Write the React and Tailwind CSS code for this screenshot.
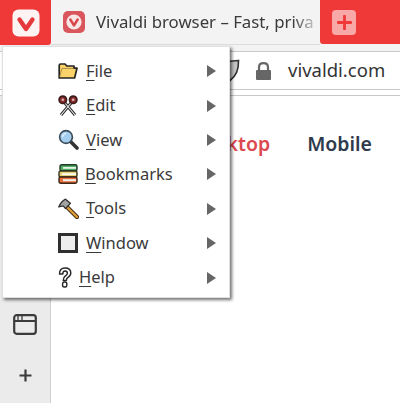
const font = { fontFamily: '"Noto Sans", "Open Sans", sans-serif' };

function VivaldiLogo() {
  return (
    <svg width="28" height="28" viewBox="0 0 28 28">
      <rect x="0.5" y="0.5" width="27" height="27" rx="6" fill="#fdf3f3" />
      <path d="M7.5 10.5 L14 20 L20.5 10.5" fill="none" stroke="#e5393c" strokeWidth="4.4" strokeLinecap="round" strokeLinejoin="round" />
    </svg>
  );
}

function TabFavicon() {
  return (
    <svg width="22" height="22" viewBox="0 0 22 22">
      <rect width="22" height="22" rx="5" fill="#d9575c" />
      <circle cx="11" cy="11" r="7.6" fill="#f9e6e6" />
      <path d="M7.4 8.6 L11 14.4 L14.6 8.6" fill="none" stroke="#d9474c" strokeWidth="2.6" strokeLinecap="round" strokeLinejoin="round" />
    </svg>
  );
}

function FolderIcon() {
  return (
    <svg width="20" height="20" viewBox="0 0 20 20">
      <path d="M1.2 17 V4.5 Q1.2 3 2.6 3 H7 L8.8 5 H16 V7.2 H19 L16.6 17 Z" fill="#fcd36a" stroke="#242424" strokeWidth="1.7" strokeLinejoin="round" />
      <path d="M1.6 16 L4 7.4 H16" fill="none" stroke="#8a7436" strokeWidth="0.7" />
    </svg>
  );
}

function ScissorsIcon() {
  return (
    <svg width="20" height="21" viewBox="0 0 20 21">
      <path d="M6.5 7.5 L17 20 M13.5 7.5 L3 20" stroke="#2b2b2b" strokeWidth="3" />
      <path d="M6.5 7.5 L17 20 M13.5 7.5 L3 20" stroke="#ececec" strokeWidth="1.1" />
      <circle cx="4.8" cy="4.8" r="3.7" fill="#8f2a2a" stroke="#3a1b1b" strokeWidth="1.7" />
      <circle cx="15.2" cy="4.8" r="3.7" fill="#8f2a2a" stroke="#3a1b1b" strokeWidth="1.7" />
      <circle cx="4.8" cy="4.8" r="1.3" fill="#d8b4b4" />
      <circle cx="15.2" cy="4.8" r="1.3" fill="#d8b4b4" />
    </svg>
  );
}

function MagnifierIcon() {
  return (
    <svg width="21" height="21" viewBox="0 0 21 21">
      <path d="M12.5 12.5 L19 19" stroke="#333" strokeWidth="3.6" strokeLinecap="round" />
      <circle cx="8" cy="8" r="6.4" fill="#a5cdf0" stroke="#3b4a55" strokeWidth="1.6" />
      <path d="M4.5 8 Q4.8 5 8 4.4" fill="none" stroke="#e6f2fc" strokeWidth="1.3" />
    </svg>
  );
}

function BooksIcon() {
  return (
    <svg width="20" height="20" viewBox="0 0 20 20">
      <rect x="2" y="0.8" width="17" height="6" rx="1.6" fill="#4fae62" stroke="#22392a" strokeWidth="1.4" />
      <rect x="1" y="7" width="18" height="6" rx="1.6" fill="#e3d27a" stroke="#33331c" strokeWidth="1.4" />
      <rect x="1" y="13" width="18" height="6.2" rx="1.6" fill="#e8703a" stroke="#3f2517" strokeWidth="1.4" />
      <rect x="5" y="3" width="13" height="1.8" fill="#e9f3ea" />
      <rect x="4" y="9.2" width="14" height="1.8" fill="#fbfbf0" />
      <rect x="5" y="15.2" width="13" height="2" fill="#f1f1f1" />
    </svg>
  );
}

function HammerIcon() {
  return (
    <svg width="21" height="21" viewBox="0 0 21 21">
      <path d="M8.5 8.5 L19 19" stroke="#3f2c0e" strokeWidth="4.2" strokeLinecap="round" />
      <path d="M8.5 8.5 L19 19" stroke="#e2a03a" strokeWidth="2.3" strokeLinecap="round" />
      <path d="M0.8 9 Q3 3.5 7.5 1.2 L12.4 5.2 L7.5 10.6 L5.5 8.2 Q3 7.8 0.8 9 Z" fill="#a3a3a3" stroke="#2f2f2f" strokeWidth="1.3" strokeLinejoin="round" />
    </svg>
  );
}

function WindowIcon() {
  return (
    <svg width="20" height="20" viewBox="0 0 20 20">
      <rect x="1.5" y="1.5" width="17" height="17" fill="#ededed" stroke="#2f2f2f" strokeWidth="3" />
    </svg>
  );
}

function QuestionIcon() {
  return (
    <svg width="14" height="21" viewBox="0 0 14 21">
      <path d="M1.5 7 Q1.5 1 7 1 Q12.8 1 12.8 6 Q12.8 8.8 10 10.4 Q8.4 11.4 8.4 13.5 H5.2 Q5.2 10.2 7.4 8.8 Q9.4 7.6 9.4 6.2 Q9.4 4 7 4 Q4.8 4 4.8 7 Z" fill="#fff" stroke="#262626" strokeWidth="1.4" strokeLinejoin="round" />
      <rect x="4.6" y="15" width="4.2" height="5" rx="1.8" fill="#fff" stroke="#262626" strokeWidth="1.4" />
    </svg>
  );
}

const menuItems = [
  { first: "F", rest: "ile", icon: <FolderIcon />, iconWidth: "w-[28px]" },
  { first: "E", rest: "dit", icon: <ScissorsIcon />, iconWidth: "w-[28px]" },
  { first: "V", rest: "iew", icon: <MagnifierIcon />, iconWidth: "w-[28px]" },
  { first: "B", rest: "ookmarks", icon: <BooksIcon />, iconWidth: "w-[27px]" },
  { first: "T", rest: "ools", icon: <HammerIcon />, iconWidth: "w-[28px]" },
  { first: "W", rest: "indow", icon: <WindowIcon />, iconWidth: "w-[28px]" },
  { first: "H", rest: "elp", icon: <QuestionIcon />, iconWidth: "w-[21px]" },
];

export default function App() {
  return (
    <div className="relative flex h-[403px] w-[400px] flex-col overflow-hidden bg-white" style={font}>
      {/* tab bar */}
      <div className="flex h-[52px] shrink-0 items-start border-b border-[#c8c8c8] bg-[#f3f3f3]">
        <div className="flex h-[45px] w-[51px] shrink-0 items-center justify-center rounded-br-[3px] bg-[#ef3939]">
          <VivaldiLogo />
        </div>
        <div className="flex h-[45px] w-[269px] shrink-0 items-center border-b border-[#dddddd] pl-[12px]">
          <TabFavicon />
          <span className="ml-[11px] w-[218px] whitespace-nowrap text-[16.8px] text-[#3a3a3a] [mask-image:linear-gradient(to_right,black_90%,rgba(0,0,0,0.25))]">
            Vivaldi browser – Fast, priva
          </span>
        </div>
        <div className="flex h-[44px] flex-1 items-center rounded-bl-[3px] bg-[#ef3939] pl-[12px]">
          <div className="flex h-[25px] w-[24px] items-center justify-center rounded-[4px] bg-[#f9a8a8]">
            <svg width="15" height="15" viewBox="0 0 15 15">
              <path d="M7.5 1 V14 M1 7.5 H14" stroke="#ef3939" strokeWidth="2.8" strokeLinecap="round" />
            </svg>
          </div>
        </div>
      </div>

      {/* address bar */}
      <div className="flex h-[38px] shrink-0 items-center border-b border-[#c8c8c8] pl-[220px]">
        <svg width="20" height="23" viewBox="0 0 20 23">
          <path d="M1 2.5 Q10 2.5 18.5 1.5 Q19 15 10 21.5 Q1 15 1 2.5 Z" fill="#c4c4c4" stroke="#333" strokeWidth="1.6" />
        </svg>
        <svg className="ml-[15px]" width="17" height="18" viewBox="0 0 17 18">
          <path d="M4 8 V5.5 Q4 1.2 8.5 1.2 Q13 1.2 13 5.5 V8" fill="none" stroke="#666" strokeWidth="2.2" />
          <rect x="1" y="8" width="15" height="10" rx="1" fill="#666" />
        </svg>
        <span className="ml-[16px] text-[18.5px] leading-none text-[#333333]">vivaldi.com</span>
      </div>
      <div className="h-[6px] shrink-0 border-b border-[#c8c8c8] bg-white" />

      {/* page */}
      <div className="flex flex-1">
        <div className="flex w-[51px] shrink-0 flex-col items-center justify-end border-r border-[#cfcfcf] bg-[#ebebeb] pb-[21px]">
          <svg width="24" height="21" viewBox="0 0 24 21" className="mb-[34px]">
            <rect x="1.2" y="1.2" width="21.6" height="18.6" rx="2.5" fill="none" stroke="#3b3b3b" strokeWidth="2.2" />
            <path d="M1.5 7 H22.5" stroke="#3b3b3b" strokeWidth="2" />
            <path d="M5 2 V6.5 M9 2 V6.5" stroke="#3b3b3b" strokeWidth="1.3" />
          </svg>
          <svg width="13" height="13" viewBox="0 0 13 13">
            <path d="M6.5 0.5 V12.5 M0.5 6.5 H12.5" stroke="#3b3b3b" strokeWidth="2.2" />
          </svg>
        </div>
        <div className="flex flex-1 justify-end pr-[28px] pt-[35px] text-[19.5px] font-semibold leading-[26px]">
          <span className="text-[#dc4a4f]">Desktop</span>
          <span className="ml-[37px] text-[#2f3a4c]">Mobile</span>
        </div>
      </div>

      {/* menu overlay */}
      <div className="absolute left-[2px] top-[46px] flex h-[252px] w-[228px] flex-col border border-[#e0e0e0] bg-white pl-[55px] pr-[13px] pt-[7px] shadow-[2px_2px_3px_rgba(0,0,0,0.55)]">
        {menuItems.map((item) => (
          <div key={item.first} className="flex h-[34.4px] shrink-0 items-center text-[16.5px] text-[#3a3a3a]">
            <span className={`flex shrink-0 items-center ${item.iconWidth}`}>{item.icon}</span>
            <span className="flex-1">
              <span className="underline decoration-1 underline-offset-[3px]">{item.first}</span>
              {item.rest}
            </span>
            <svg width="9" height="12" viewBox="0 0 9 12">
              <path d="M0 0 L9 6 L0 12 Z" fill="#666" />
            </svg>
          </div>
        ))}
      </div>
    </div>
  );
}
